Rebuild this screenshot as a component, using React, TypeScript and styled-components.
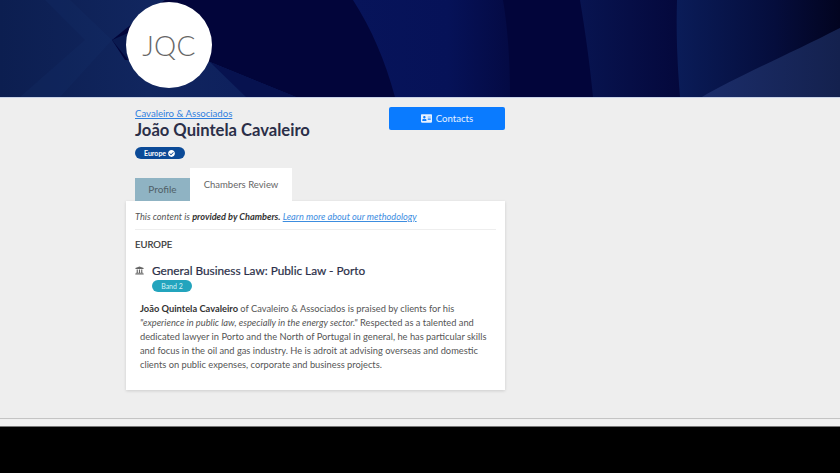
import React from "react";
import styled, { createGlobalStyle } from "styled-components";
import { FaUniversity, FaAddressCard, FaCheckCircle } from "react-icons/fa";

const Global = createGlobalStyle`
  html, body { margin: 0; padding: 0; background: #000; }
  body { font-family: Lato, "Open Sans", sans-serif; color: #555; overflow: hidden; }
  * { box-sizing: border-box; }
`;

const Page = styled.div`
  width: 840px;
  height: 473px;
  display: flex;
  flex-direction: column;
  background: #000;
`;

const Light = styled.div`
  height: 427px;
  background: #eee;
  border-bottom: 1px solid #777;
  display: flex;
  flex-direction: column;
`;

const Banner = styled.header`
  position: relative;
  height: 98px;
  flex: none;
  padding: 2px 0 0 126px;
  background: #02053a;
  border-bottom: 1px solid #c9d2e6;
  overflow: hidden;
`;

const BannerArt = styled.svg`
  position: absolute;
  inset: 0;
  width: 840px;
  height: 97px;
`;

const Avatar = styled.div`
  position: relative;
  width: 86px;
  height: 86px;
  border-radius: 50%;
  background: #fff;
  display: flex;
  align-items: center;
  justify-content: center;
  font-size: 28px;
  font-weight: 300;
  letter-spacing: 0.3px;
  color: #666;
`;

const Main = styled.main`
  width: 379px;
  margin-left: 126px;
  flex: none;
`;

const Head = styled.section`
  display: flex;
  justify-content: space-between;
  padding: 9px 0 0 9px;
  height: 70px;
`;

const Identity = styled.div`
  display: flex;
  flex-direction: column;
  align-items: flex-start;
`;

const FirmLink = styled.a`
  font-size: 9.6px;
  line-height: 14px;
  color: #2f80e0;
  text-decoration: underline;
`;

const Name = styled.h1`
  margin: 0;
  font-size: 16.6px;
  line-height: 18px;
  font-weight: 700;
  color: #2b2f48;
`;

const RegionPill = styled.span`
  display: inline-flex;
  align-items: center;
  gap: 2px;
  margin-top: 8px;
  height: 12px;
  padding: 0 10px 0 9px;
  border-radius: 6px;
  background: #0b4a97;
  color: #fff;
  font-size: 7px;
  font-weight: 700;
`;

const ContactButton = styled.button`
  width: 116px;
  height: 23px;
  border: 0;
  border-radius: 2px;
  background: #0a7bff;
  color: #e6f1ff;
  font: 400 9.6px Lato, sans-serif;
  display: flex;
  align-items: center;
  justify-content: center;
  gap: 4px;
`;

const Tabs = styled.nav`
  display: flex;
  align-items: flex-end;
  height: 34px;
  padding-left: 9px;
  margin-top: -1px;
`;

const Tab = styled.div<{ $active?: boolean }>`
  height: ${(p) => (p.$active ? 33 : 23)}px;
  width: ${(p) => (p.$active ? 102 : 55)}px;
  background: ${(p) => (p.$active ? "#fff" : "#8fb3c3")};
  color: ${(p) => (p.$active ? "#666" : "#4f5f68")};
  font-size: ${(p) => (p.$active ? 9.5 : 10)}px;
  display: flex;
  justify-content: center;
  padding-top: ${(p) => (p.$active ? 11 : 5)}px;
  line-height: 12px;
`;

const Card = styled.article`
  background: #fff;
  height: 189px;
  padding: 10px 9px 0;
  box-shadow: 0 1px 3px rgba(0, 0, 0, 0.14);
`;

const Note = styled.p`
  margin: 0;
  padding-bottom: 6px;
  border-bottom: 1px solid #eee;
  font-size: 9.2px;
  line-height: 12px;
  font-style: italic;
  color: #555;
  b { color: #333; }
  a { color: #3d8ddf; text-decoration: underline; }
`;

const Region = styled.h2`
  margin: 9px 0 0;
  font-size: 9.5px;
  line-height: 12px;
  font-weight: 400;
  color: #333;
  -webkit-text-stroke: 0.2px #333;
`;

const Ranking = styled.div`
  display: flex;
  margin-top: 13px;
  gap: 8px;
`;

const RankIcon = styled.div`
  width: 9px;
  padding-top: 2px;
  color: #666;
  display: flex;
`;

const RankBody = styled.div`
  display: flex;
  flex-direction: column;
  align-items: flex-start;
`;

const RankTitle = styled.h3`
  margin: 0;
  font-size: 11.8px;
  line-height: 14px;
  font-weight: 400;
  color: #2b2f48;
  -webkit-text-stroke: 0.2px #2b2f48;
`;

const Band = styled.span`
  height: 12px;
  width: 40px;
  margin-top: 2px;
  border-radius: 6px;
  background: #23a4bd;
  color: #d8f2f7;
  font-size: 7px;
  line-height: 12px;
  text-align: center;
`;

const Body = styled.p`
  margin: 10px 0 0 5px;
  width: 352px;
  font-size: 9.3px;
  line-height: 14px;
  color: #555;
  b { color: #333; }
`;

const Footer = styled.footer`
  margin-top: auto;
  height: 8px;
  border-top: 1px solid #c4c4c4;
  background: #f0f0f0;
  flex: none;
`;

export default function App() {
  return (
    <Page>
      <Global />
      <Light>
        <Banner>
          <BannerArt viewBox="0 0 840 97" aria-hidden="true">
            <defs>
              <linearGradient id="left" x1="0" x2="1">
                <stop offset="0" stopColor="#0c1e50" />
                <stop offset="0.5" stopColor="#11265f" />
                <stop offset="1" stopColor="#0c1d5c" />
              </linearGradient>
              <linearGradient id="mid" x1="0" x2="1">
                <stop offset="0" stopColor="#07145a" />
                <stop offset="0.6" stopColor="#061258" />
                <stop offset="1" stopColor="#040a44" />
              </linearGradient>
              <linearGradient id="next" x1="0" x2="1">
                <stop offset="0" stopColor="#081450" />
                <stop offset="1" stopColor="#04083c" />
              </linearGradient>
              <linearGradient id="far" x1="0" x2="1">
                <stop offset="0" stopColor="#0a1c58" />
                <stop offset="0.6" stopColor="#050d3c" />
                <stop offset="1" stopColor="#020420" />
              </linearGradient>
              <linearGradient id="corner" x1="0" x2="1">
                <stop offset="0" stopColor="#1b2d6a" />
                <stop offset="1" stopColor="#14214e" />
              </linearGradient>
            </defs>
            <rect width="840" height="97" fill="#02053a" />
            <path d="M0 0H165C150 10 130 25 112 40 L125 60 L210 62 L296 97H0Z" fill="url(#left)" />
            <path d="M70 0 L112 40 L60 97H20 L85 40 L45 0Z" fill="#16306e" opacity="0.22" />
            <path d="M112 40 L128 33 L128 60 Z" fill="#0a1a50" />
            <path d="M210 62 L246 97H296Z" fill="#07124f" />
            <path d="M353 0C372 30 385 60 395 97H510C510 62 508 30 503 0Z" fill="url(#mid)" />
            <path d="M580 0C585 30 590 65 593 97H680C677 60 676 30 677 0Z" fill="url(#next)" />
            <path d="M677 0H840V28C785 60 730 80 705 97H680C677 60 676 30 677 0Z" fill="url(#far)" />
            <path d="M840 28C785 56 730 80 702 97H840Z" fill="url(#corner)" />
          </BannerArt>
          <Avatar>JQC</Avatar>
        </Banner>
        <Main>
          <Head>
            <Identity>
              <FirmLink>Cavaleiro &amp; Associados</FirmLink>
              <Name>João Quintela Cavaleiro</Name>
              <RegionPill>
                Europe <FaCheckCircle size={7} />
              </RegionPill>
            </Identity>
            <ContactButton>
              <FaAddressCard size={11} /> Contacts
            </ContactButton>
          </Head>
          <Tabs>
            <Tab>Profile</Tab>
            <Tab $active>Chambers Review</Tab>
          </Tabs>
          <Card>
            <Note>
              This content is <b>provided by Chambers.</b> <a>Learn more about our methodology</a>
            </Note>
            <Region>EUROPE</Region>
            <Ranking>
              <RankIcon>
                <FaUniversity size={9} />
              </RankIcon>
              <RankBody>
                <RankTitle>General Business Law: Public Law - Porto</RankTitle>
                <Band>Band 2</Band>
              </RankBody>
            </Ranking>
            <Body>
              <b>João Quintela Cavaleiro</b> of Cavaleiro &amp; Associados is praised by clients for his{" "}
              <i>"experience in public law, especially in the energy sector."</i> Respected as a talented and dedicated
              lawyer in Porto and the North of Portugal in general, he has particular skills and focus in the oil and
              gas industry. He is adroit at advising overseas and domestic clients on public expenses, corporate and
              business projects.
            </Body>
          </Card>
        </Main>
        <Footer />
      </Light>
    </Page>
  );
}
